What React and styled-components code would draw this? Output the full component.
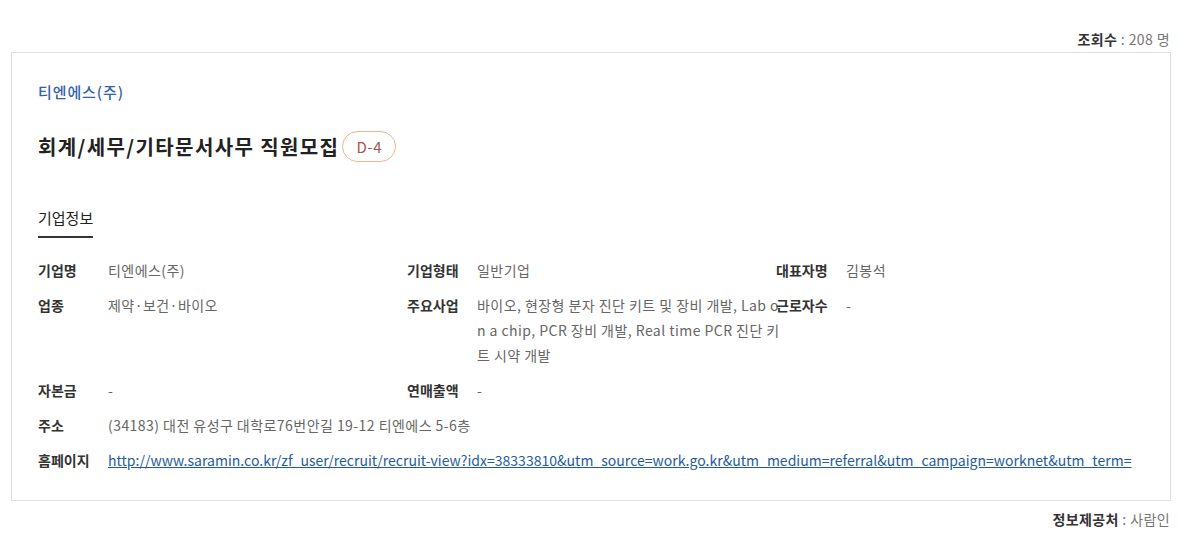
import React from 'react'
import styled, { createGlobalStyle } from 'styled-components'

const GlobalStyle = createGlobalStyle`
    body{
        margin: 0;
        background: #fff;
        font-family: "Noto Sans CJK KR", "Noto Sans", sans-serif;
        color: #333;
    }
`;

const Page = styled.div`
    padding: 29px 16px 0 11px;
`;

const Meta = styled.div`
    display: flex;
    justify-content: flex-end;
    font-size: 14px;
    line-height: 20px;
    letter-spacing: 0.4px;
    color: #777;
    padding-right: 1px;
    margin: ${props => props.bottom ? '8px 0 0' : '0 0 3px'};

    strong{
        color: #333;
        font-weight: 700;
    }
`;

const Card = styled.section`
    border: 1px solid #ddd;
    padding: 28px 26px 27px;
`;

const Company = styled.div`
    font-size: 15px;
    line-height: 22px;
    letter-spacing: 0.9px;
    color: #2f63a8;
    font-weight: 500;
`;

const TitleRow = styled.div`
    display: flex;
    align-items: center;
    gap: 3px;
    margin-top: 28px;
    height: 31px;
`;

const Title = styled.h1`
    margin: 0;
    font-size: 20px;
    font-weight: 700;
    color: #222;
    letter-spacing: 1.4px;
`;

const Badge = styled.span`
    display: inline-flex;
    align-items: center;
    height: 29px;
    padding: 0 13px;
    border: 1px solid #f2b48c;
    border-radius: 16px;
    font-size: 15px;
    letter-spacing: 0.6px;
    color: #a0584e;
`;

const Tabs = styled.div`
    display: flex;
    margin-top: 45px;
`;

const Tab = styled.div`
    font-size: 15px;
    line-height: 22px;
    color: #222;
    padding-bottom: 7px;
    border-bottom: 2px solid #333;
`;

const InfoGrid = styled.dl`
    display: grid;
    grid-template-columns: repeat(3, 369px);
    row-gap: 10px;
    margin: 20px 0 0;
`;

const Item = styled.div`
    display: flex;
    grid-column: ${props => props.wide ? '1 / -1' : 'auto'};
    font-size: 14px;
    line-height: 25px;
`;

const Label = styled.dt`
    flex: 0 0 70px;
    font-weight: 700;
    color: #333;
`;

const Value = styled.dd`
    margin: 0;
    flex: ${props => props.wide ? '1 1 auto' : '0 0 304px'};
    color: #666;
    letter-spacing: 0.45px;
    word-break: break-all;
    white-space: ${props => props.nowrap ? 'nowrap' : 'normal'};
`;

const Link = styled.a`
    color: #1f5c9e;
    text-decoration: underline;
    white-space: nowrap;
    letter-spacing: 0.02px;
`;

const info = [
    ['기업명', '티엔에스(주)'],
    ['기업형태', '일반기업'],
    ['대표자명', '김봉석'],
    ['업종', '제약·보건·바이오'],
    ['주요사업', '바이오, 현장형 분자 진단 키트 및 장비 개발, Lab on a chip, PCR 장비 개발, Real time PCR 진단 키트 시약 개발'],
    ['근로자수', '-'],
    ['자본금', '-'],
    ['연매출액', '-'],
    ['', ''],
]

const url = 'http://www.saramin.co.kr/zf_user/recruit/recruit-view?idx=38333810&utm_source=work.go.kr&utm_medium=referral&utm_campaign=worknet&utm_term='

const App = () => {
    return (
        <Page>
            <GlobalStyle />
            <Meta><strong>조회수</strong>&nbsp;: 208 명</Meta>
            <Card>
                <Company>티엔에스(주)</Company>
                <TitleRow>
                    <Title>회계/세무/기타문서사무 직원모집</Title>
                    <Badge>D-4</Badge>
                </TitleRow>
                <Tabs>
                    <Tab>기업정보</Tab>
                </Tabs>
                <InfoGrid>
                    {
                        info.map(([label, value], i) => (
                            <Item key={i}>
                                <Label>{label}</Label>
                                <Value>{value}</Value>
                            </Item>
                        ))
                    }
                    <Item wide>
                        <Label>주소</Label>
                        <Value wide>(34183) 대전 유성구 대학로76번안길 19-12 티엔에스 5-6층</Value>
                    </Item>
                    <Item wide>
                        <Label>홈페이지</Label>
                        <Value wide nowrap><Link href={url}>{url}</Link></Value>
                    </Item>
                </InfoGrid>
            </Card>
            <Meta bottom><strong>정보제공처</strong>&nbsp;: 사람인</Meta>
        </Page>
    )
}

export default App
